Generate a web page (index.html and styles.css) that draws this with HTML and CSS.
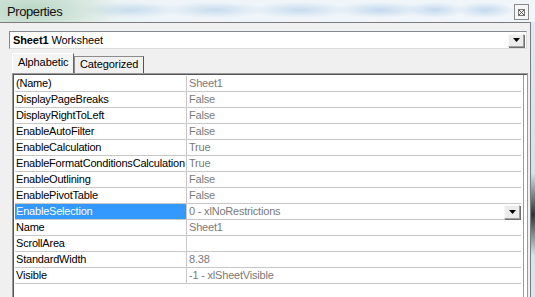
FILE: index.html
```html
<!DOCTYPE html>
<html>
<head>
<meta charset="utf-8">
<link rel="stylesheet" href="styles.css">
</head>
<body>
<div class="window">
  <div class="titlebar">
    <span class="title">Properties</span>
    <span class="close">
      <svg width="15" height="16" viewBox="0 0 15 16">
        <rect x="0.5" y="0.5" width="14" height="15" fill="#f4f6f8" stroke="#8a8a8a"/>
        <rect x="4.5" y="5.5" width="6" height="6" fill="none" stroke="#777"/>
        <path d="M5 6 L10 11 M10 6 L5 11" stroke="#555" stroke-width="1"/>
      </svg>
    </span>
  </div>
  <div class="body">
    <div class="combo">
      <span class="combo-text"><b>Sheet1</b> Worksheet</span>
      <span class="ddbtn"><svg width="7" height="4" viewBox="0 0 7 4"><path d="M0 0 H7 L3.5 4 Z" fill="#000"/></svg></span>
    </div>
    <div class="tabs">
      <div class="tab active">Alphabetic</div>
      <div class="tab">Categorized</div>
    </div>
    <div class="grid">
      <div class="row"><div class="name">(Name)</div><div class="val">Sheet1</div></div>
      <div class="row"><div class="name">DisplayPageBreaks</div><div class="val">False</div></div>
      <div class="row"><div class="name">DisplayRightToLeft</div><div class="val">False</div></div>
      <div class="row"><div class="name">EnableAutoFilter</div><div class="val">False</div></div>
      <div class="row"><div class="name">EnableCalculation</div><div class="val">True</div></div>
      <div class="row"><div class="name">EnableFormatConditionsCalculation</div><div class="val">True</div></div>
      <div class="row"><div class="name">EnableOutlining</div><div class="val">False</div></div>
      <div class="row"><div class="name">EnablePivotTable</div><div class="val">False</div></div>
      <div class="row selected"><div class="name">EnableSelection</div><div class="val">0 - xlNoRestrictions<span class="ddbtn small"><svg width="7" height="4" viewBox="0 0 7 4"><path d="M0 0 H7 L3.5 4 Z" fill="#000"/></svg></span></div></div>
      <div class="row"><div class="name">Name</div><div class="val">Sheet1</div></div>
      <div class="row"><div class="name">ScrollArea</div><div class="val"></div></div>
      <div class="row"><div class="name">StandardWidth</div><div class="val">8.38</div></div>
      <div class="row"><div class="name">Visible</div><div class="val">-1 - xlSheetVisible</div></div>
    </div>
  </div>
  <div class="desk"></div>
</div>
</body>
</html>
```
FILE: styles.css
```css
html, body {
  margin: 0;
  padding: 0;
}
body {
  font-family: "Liberation Sans", Arial, sans-serif;
  font-size: 11px;
  color: #000;
  background: #f0f0f0;
  overflow: hidden;
}
.window {
  width: 535px;
  height: 297px;
  position: relative;
  overflow: hidden;
  display: flex;
  flex-direction: column;
  background: #f0f0f0;
}
.titlebar {
  height: 22px;
  flex: none;
  display: flex;
  align-items: center;
  justify-content: space-between;
  padding: 0 6px 0 7px;
  background:
    radial-gradient(ellipse 90px 30px at 30px 10px, #b9d6c4 0%, rgba(200,225,210,0) 100%),
    radial-gradient(ellipse 50px 8px at 130px 10px, #c7dcef 0%, rgba(230,240,248,0) 100%),
    radial-gradient(ellipse 50px 8px at 215px 10px, #c7dcef 0%, rgba(230,240,248,0) 100%),
    radial-gradient(ellipse 50px 8px at 300px 10px, #c7dcef 0%, rgba(230,240,248,0) 100%),
    radial-gradient(ellipse 45px 8px at 380px 10px, #c3d9ee 0%, rgba(230,240,248,0) 100%),
    radial-gradient(ellipse 30px 8px at 435px 10px, #c3d9ee 0%, rgba(230,240,248,0) 100%),
    radial-gradient(ellipse 30px 8px at 485px 10px, #c3d9ee 0%, rgba(230,240,248,0) 100%),
    linear-gradient(to right, #e4efe8, #eef4f8 30%, #f1f6fa);
}
.title {
  font-size: 13px;
  color: #111;
  letter-spacing: -0.4px;
}
.close {
  display: flex;
  margin-top: 1px;
}
.body {
  flex: 1;
  width: 531px;
  border-top: 1px solid #7c7c7c;
  border-right: 1px solid #7c7c7c;
  box-sizing: border-box;
  background: #f0f0f0;
  padding: 8px 3px 0 9px;
  display: flex;
  flex-direction: column;
}
.desk {
  position: absolute;
  right: 0;
  top: 22px;
  width: 4px;
  bottom: 0;
  background: linear-gradient(to bottom, #d9ecf4 0%, #cfe4ee 55%, #333 70%, #d2e6f0 85%, #d6e9f2 100%);
}
.combo {
  height: 18px;
  width: 518px;
  box-sizing: border-box;
  border: 1px solid #828790;
  border-bottom-color: #dcdcdc;
  border-right-color: #dcdcdc;
  background: #fff;
  display: flex;
  align-items: center;
  justify-content: space-between;
  padding: 0 2px 0 3px;
  flex: none;
  letter-spacing: -0.1px;
}
.combo-text b {
  font-weight: bold;
}
.ddbtn {
  width: 16px;
  height: 13px;
  box-sizing: border-box;
  border: 1px solid #a0a0a0;
  border-top-color: #f8f8f8;
  border-left-color: #f8f8f8;
  box-shadow: 1px 1px 0 #707070;
  background: #ececec;
  display: flex;
  align-items: center;
  justify-content: center;
}
.tabs {
  display: flex;
  align-items: flex-end;
  margin-top: 4px;
  margin-left: 3px;
  height: 20px;
  flex: none;
  letter-spacing: -0.1px;
}
.tab {
  height: 17px;
  box-sizing: border-box;
  padding: 1px 5px 0 5px;
  border: 1px solid #8c8c8c;
  border-bottom: none;
  border-right-color: #555;
  background: #f0f0f0;
}
.tab.active {
  height: 20px;
  padding-top: 2px;
  background: #f4f4f4;
  border-color: #fff;
  border-right-color: #666;
  width: 62px;
}
.grid {
  flex: 1;
  margin-left: 3px;
  width: 516px;
  box-sizing: border-box;
  border: 1px solid #9a9a9a;
  border-bottom: none;
  box-shadow: inset 1px 1px 0 #555, inset -1px 0 0 #fff, inset -3px 0 0 #fff, inset -4px 0 0 #9a9a9a;
  background: #fff;
  padding: 2px 6px 0 2px;
  display: flex;
  flex-direction: column;
  letter-spacing: -0.2px;
}
.row {
  display: flex;
  height: 16px;
  flex: none;
  box-sizing: border-box;
  border-bottom: 1px solid #c8c8c8;
}
.name {
  width: 172px;
  flex: none;
  box-sizing: border-box;
  border-right: 1px solid #c8c8c8;
  padding-left: 1px;
  line-height: 15px;
  white-space: nowrap;
  overflow: hidden;
}
.val {
  flex: 1;
  padding-left: 2px;
  line-height: 15px;
  color: #7a7a7a;
  display: flex;
  align-items: center;
  justify-content: space-between;
  padding-right: 1px;
}
.selected .name {
  background: #3399ff;
  color: #fff;
}
.ddbtn.small {
  height: 14px;
  width: 16px;
}
```
